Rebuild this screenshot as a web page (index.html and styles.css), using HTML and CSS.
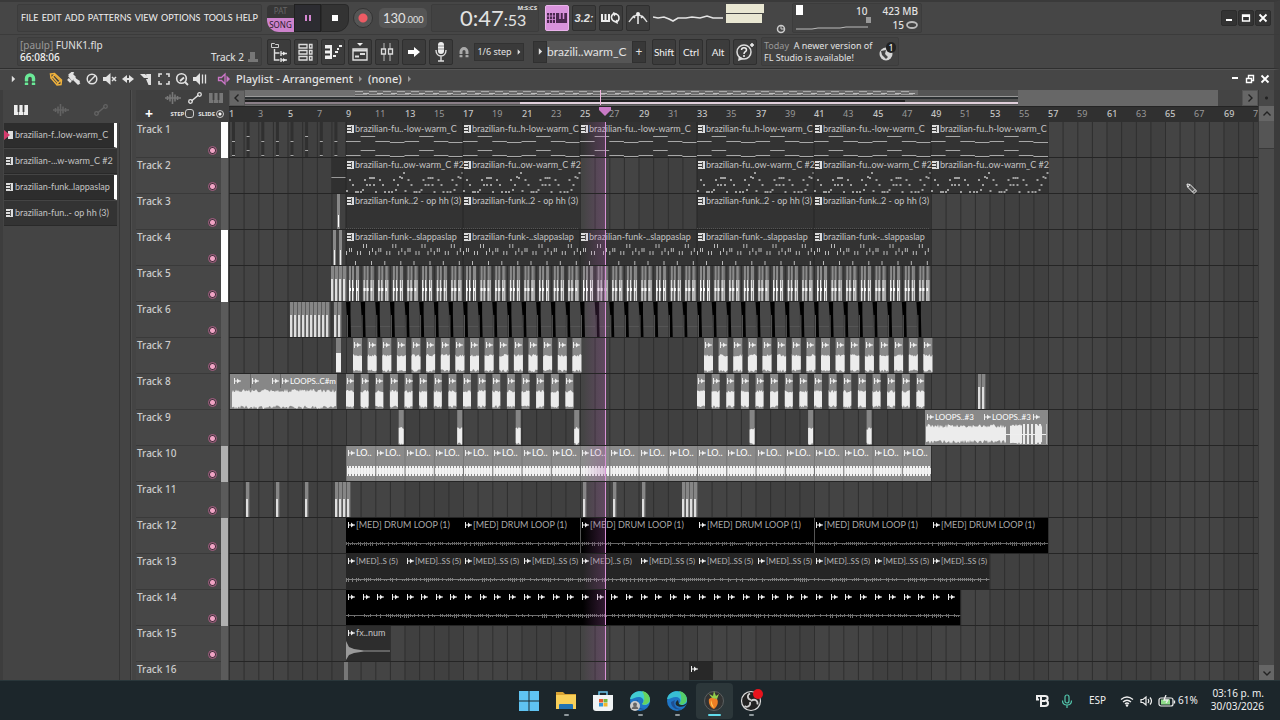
FILE: index.html
```html
<!DOCTYPE html>
<html lang="en">
<head>
<meta charset="utf-8">
<title>FUNK1.flp - FL Studio</title>
<link rel="stylesheet" href="styles.css">
</head>
<body>
<svg class="sprite" aria-hidden="true">
  <symbol id="i-tri" viewBox="0 0 6 8"><path d="M1 0l4 4-4 4z" fill="currentColor"/></symbol>
  <symbol id="i-magnet" viewBox="0 0 14 14"><path d="M3.500 13V6.500a3.500 3.500 0 0 1 7 0V13" fill="none" stroke="currentColor" stroke-width="3.400"/><path d="M1 10h5M8 10h5" stroke="#333" stroke-width="1"/></symbol>
  <symbol id="i-pencil" viewBox="0 0 14 14"><path d="M1.500 2l4-.5 7 6.500-.5 4.500-4 .5-6-7z" fill="none" stroke="currentColor" stroke-width="1.500"/><path d="M3.500 4.500l6 7M5.500 3l6.500 6.500M2 6.500l4-4.500M8 12l4-4" stroke="currentColor" stroke-width="1.200"/></symbol>
  <symbol id="i-brush" viewBox="0 0 14 14"><path d="M1 4l4-3 4 4-4 4z" fill="currentColor"/><path d="M2 3.500L6.500 0M1 7l3 3M7 6l5.500 6" stroke="currentColor" stroke-width="2.500"/><path d="M8 6l5 3-2 4-5-5z" fill="currentColor"/></symbol>
  <symbol id="i-no" viewBox="0 0 14 14"><circle cx="7" cy="7" r="4.800" fill="none" stroke="currentColor" stroke-width="1.500"/><path d="M3.600 10.400l6.800-6.800" stroke="currentColor" stroke-width="1.400"/></symbol>
  <symbol id="i-mute" viewBox="0 0 14 14"><path d="M0 5h3l4.500-4v12L3 9H0z" fill="currentColor"/><path d="M9 5l4 4M13 5L9 9" stroke="currentColor" stroke-width="1.500"/></symbol>
  <symbol id="i-slip" viewBox="0 0 14 14"><path d="M1 7l5-4v3h2V3l5 4-5 4V8H6v3z" fill="currentColor"/></symbol>
  <symbol id="i-slice" viewBox="0 0 14 14"><path d="M1 2h5l4 4H5zM7 2h5v11h-2.500L7 7h2z" fill="currentColor"/></symbol>
  <symbol id="i-select" viewBox="0 0 14 14"><path d="M2 5V2h3M9 2h3v3M12 9v3H9M5 12H2V9" fill="none" stroke="currentColor" stroke-width="1.600"/></symbol>
  <symbol id="i-zoom" viewBox="0 0 14 14"><circle cx="6.500" cy="6.500" r="4.800" fill="none" stroke="currentColor" stroke-width="1.600"/><path d="M10 10l3 3M5 9L9 5.500" stroke="currentColor" stroke-width="1.800"/></symbol>
  <symbol id="i-play" viewBox="0 0 14 14"><path d="M0 5h3l4-4v12L3 9H0z" fill="currentColor"/><path d="M9.500 2.500v9M12.500 2.500v9" stroke="currentColor" stroke-width="1.300"/></symbol>
  <symbol id="i-speaker" viewBox="0 0 14 14"><path d="M1.500 5.500h3L8 2v10L4.500 8.500h-3z" fill="none" stroke="currentColor" stroke-width="1.300"/><path d="M9.500 3.500L13 7l-3.500 3.500z" fill="currentColor"/></symbol>
  <symbol id="i-piano" viewBox="0 0 14 12"><path d="M0 1h14v10H0z" fill="currentColor"/><path d="M4.500 1v7M9.500 1v7" stroke="#3f3f3f" stroke-width="1.800"/><path d="M4.500 8v3M9.500 8v3" stroke="#3f3f3f" stroke-width=".6"/></symbol>
  <symbol id="i-wave" viewBox="0 0 16 12"><path d="M0 6h16M2.500 4v4M5 2.500v7M7.500 0v12M10 2.500v7M12.500 4v4" stroke="currentColor" stroke-width="1.600"/></symbol>
  <symbol id="i-auto" viewBox="0 0 14 12"><path d="M3.500 9l7-6" stroke="currentColor" stroke-width="1.500"/><circle cx="2.500" cy="9.500" r="1.800" fill="none" stroke="currentColor" stroke-width="1.300"/><circle cx="11.500" cy="2.500" r="1.800" fill="none" stroke="currentColor" stroke-width="1.300"/></symbol>
  <symbol id="i-min" viewBox="0 0 10 10"><path d="M2 6h6v2H2z" fill="currentColor"/></symbol>
  <symbol id="i-max" viewBox="0 0 10 10"><path d="M1.500 2h7v6h-7z" fill="none" stroke="currentColor" stroke-width="1.300"/><path d="M1 2h8v2H1z" fill="currentColor"/></symbol>
  <symbol id="i-restore" viewBox="0 0 10 10"><path d="M1.500 4.500h5v4h-5zM3.500 4V1.500h5v5H7" fill="none" stroke="currentColor" stroke-width="1.400"/></symbol>
  <symbol id="i-close" viewBox="0 0 10 10"><path d="M1.500 1.500l7 7M8.500 1.500l-7 7" stroke="currentColor" stroke-width="1.800"/></symbol>
  <symbol id="i-left" viewBox="0 0 10 10"><path d="M6.500 1.500L3 5l3.500 3.500" fill="none" stroke="currentColor" stroke-width="1.400"/></symbol>
  <symbol id="i-right" viewBox="0 0 10 10"><path d="M3.500 1.500L7 5 3.500 8.500" fill="none" stroke="currentColor" stroke-width="1.400"/></symbol>
  <symbol id="i-up" viewBox="0 0 10 10"><path d="M1.500 6.500L5 3l3.500 3.500" fill="none" stroke="currentColor" stroke-width="1.400"/></symbol>
  <symbol id="i-down" viewBox="0 0 10 10"><path d="M1.500 3.500L5 7l3.500-3.500" fill="none" stroke="currentColor" stroke-width="1.400"/></symbol>
  <symbol id="i-pattern" viewBox="0 0 7 8"><path d="M0 0h7v8H0z" fill="#ddd"/><path d="M0 2.500h4M0 5.500h4" stroke="#333" stroke-width="1"/><path d="M4.500 1v6" stroke="#555" stroke-width="1"/></symbol>
  <symbol id="i-arrow" viewBox="0 0 7 6"><path d="M.5 0v6M1 3h6" stroke="currentColor" stroke-width="1"/><path d="M3 .5L6 3 3 5.500z" fill="currentColor"/></symbol>
</svg>

<div class="app">
  <header class="bar bar-top">
    <nav class="menu panel">
      <button>FILE</button><button>EDIT</button><button>ADD</button><button>PATTERNS</button><button>VIEW</button><button>OPTIONS</button><button>TOOLS</button><button>HELP</button>
    </nav>
    <div class="transport">
      <button class="mode"><span class="mode-pat">PAT</span><span class="mode-song">SONG</span></button>
      <button class="pause" aria-label="Pause"><svg width="8" height="8" viewBox="0 0 8 8"><path d="M1 1h2v6H1zM5 1h2v6H5z" fill="#d587d3"/></svg></button>
      <button class="stop" aria-label="Stop"><svg width="6" height="6"><path d="M0 0h6v6H0z" fill="#fff"/></svg></button>
      <button class="record" aria-label="Record"></button>
      <div class="tempo">130<small>.000</small></div>
    </div>
    <div class="clock panel"><span class="clock-main">0:47</span><span class="clock-sub">:53</span><span class="clock-unit">M:S:CS</span></div>
    <div class="tools">
      <button class="tool on" aria-label="Typing keyboard"><svg width="20" height="12" viewBox="0 0 20 12"><path d="M0 1h8v10H0zM9 1h11v10H9z" fill="#4c2850"/><path d="M2.500 1v10M5.500 1v10M0 4h8M0 7.500h8" stroke="#d98fdc" stroke-width=".8"/><path d="M13 1v6M16.500 1v6" stroke="#d98fdc" stroke-width="1.500"/></svg></button>
      <button class="tool count">3.2ː</button>
      <button class="tool" aria-label="Loop record"><svg width="20" height="12" viewBox="0 0 20 12"><path d="M1 2v7h7V2M4.500 2v7" fill="none" stroke="#eee" stroke-width="2"/><path d="M13 1.500c-4 2-3 7 1 8M15 2c4 1 4 7 0 8" fill="none" stroke="#eee" stroke-width="1.500"/><path d="M12 0l4 1.500-3 3zM17 12l-4-2 3-2.500z" fill="#eee"/></svg></button>
      <button class="tool" aria-label="Metronome"><svg width="20" height="14" viewBox="0 0 20 14"><path d="M1 11C4 6 7 4 10 4s6 2 9 7" fill="none" stroke="#ddd" stroke-width="1.400"/><path d="M10 13V3M5 5l2 2M15 5l-2 2" stroke="#eee" stroke-width="1.500"/><circle cx="10" cy="3" r="2" fill="#eee"/></svg></button>
    </div>
    <svg class="scope" width="70" height="16" viewBox="0 0 70 16"><path d="M0 7l5 1 6-1 5 2 4 2 5-3 8 0 6-1 8 1 7-2 6 2h10" fill="none" stroke="#e4e4e4" stroke-width="1.600"/></svg>
    <div class="meters"><span class="meter"></span><span class="meter short"></span>
      <svg class="peak" width="10" height="10" viewBox="0 0 10 10"><circle cx="5" cy="5" r="3.500" fill="none" stroke="#ccc" stroke-width="1.500"/><path d="M5 2v3h3" fill="none" stroke="#ccc"/></svg></div>
    <div class="stats panel">
      <svg class="cpu" width="76" height="26" viewBox="0 0 76 26"><path d="M0 1h7v10H0z" fill="#fff"/><path d="M0 25h16l6-1h22l6-1h22" fill="none" stroke="#bbb" stroke-width="1"/><path d="M70 13h5v6h-5z" fill="#999"/></svg>
      <div class="stat-cpu">10</div>
      <div class="stat-mem"><span>423 MB</span><span>15 <svg width="12" height="8" viewBox="0 0 12 8"><ellipse cx="6" cy="4" rx="5" ry="3" fill="none" stroke="#bbb" stroke-width="1.800"/></svg></span></div>
    </div>
    <div class="window-buttons">
      <button aria-label="Minimize"><svg width="10" height="10"><use href="#i-min"/></svg></button><button aria-label="Maximize"><svg width="10" height="10"><use href="#i-max"/></svg></button><button aria-label="Close"><svg width="10" height="10"><use href="#i-close"/></svg></button>
    </div>
  </header>

  <div class="bar bar-second">
    <div class="hint panel">
      <div><span class="dim">[paulp]</span> FUNK1.flp</div>
      <div class="hint-line"><span class="bright">66:08:06</span><span>Track 2 <svg width="12" height="12" viewBox="0 0 12 12"><path d="M3 1h5v9H3zM1 8h10v3H1z" fill="#777"/></svg></span></div>
    </div>
    <div class="views">
      <button class="tool" aria-label="Browser"><svg width="18" height="20" viewBox="0 0 18 20"><path d="M1.500 1.500h3l1 1h3v3h-7z" fill="none" stroke="#ccc"/><path d="M4.500 7v11h5M4.500 11h5M11 9v5M11 16v4M11 11.500h6M11 18h6" fill="none" stroke="#ddd" stroke-width="1.400"/><path d="M13 9.500l3 2-3 2zM13 16l3 2-3 2z" fill="#eee"/></svg></button>
      <button class="tool" aria-label="Channel rack"><svg width="16" height="18" viewBox="0 0 16 18"><path d="M1 1.500h8v3.500H1zM1 7.500h8V11H1zM1 13.500h8V17H1zM11.500 1.500H14v3.500h-2.500zM11.500 7.500H14V11h-2.500zM11.500 13.500H14V17h-2.500z" fill="none" stroke="#ddd" stroke-width="1.300"/></svg></button>
      <button class="tool" aria-label="Piano roll"><svg width="18" height="16" viewBox="0 0 18 16"><path d="M1 1h7v14H1z" fill="#eee"/><path d="M1 5.500h5M1 10.500h5" stroke="#333" stroke-width="2"/><path d="M9 12h3M11 8h3M13 5h2M15 2h3" stroke="#eee" stroke-width="2.200"/></svg></button>
      <button class="tool" aria-label="Playlist"><svg width="18" height="20" viewBox="0 0 18 20"><path d="M6 1h6l-3 3z" fill="#eee"/><path d="M2 7h14v11H2z" fill="none" stroke="#ddd" stroke-width="1.400"/><path d="M2 8.500h14M4 14.500h4M9 12h5" stroke="#ddd" stroke-width="2"/></svg></button>
      <button class="tool" aria-label="Mixer"><svg width="14" height="20" viewBox="0 0 14 20"><path d="M4 1v18M10 1v18" stroke="#bbb"/><path d="M1.500 7h4v5h-4zM8.500 7h4v5h-4z" fill="#444" stroke="#ddd" stroke-width="1.300"/></svg></button>
      <button class="tool" aria-label="Jump"><svg width="14" height="12" viewBox="0 0 14 12"><path d="M1 4h6V1l6 5-6 5V8H1z" fill="#fff"/></svg></button>
      <button class="tool" aria-label="Record audio"><svg width="12" height="20" viewBox="0 0 12 20"><rect x="3" y="0" width="6" height="12" rx="3" fill="#eee"/><path d="M1 8c0 8 10 8 10 0M6 14v5M3 19h6" fill="none" stroke="#ddd" stroke-width="1.400"/><path d="M3 4h6M3 7h6" stroke="#777" stroke-width=".8"/></svg></button>
    </div>
    <div class="snap"><svg width="12" height="14"><use href="#i-magnet"/></svg><button class="snap-value">1/6 step <svg width="4" height="6"><use href="#i-tri"/></svg></button></div>
    <div class="pattern">
      <button class="pattern-side" aria-label="Pattern menu"><svg width="5" height="7"><use href="#i-tri"/></svg></button><button class="pattern-name">brazili..warm_C</button><button class="pattern-side">+</button>
    </div>
    <div class="views keys">
      <button class="tool">Shift</button><button class="tool">Ctrl</button><button class="tool">Alt</button>
      <button class="tool" aria-label="Help"><svg width="20" height="20" viewBox="0 0 20 20"><circle cx="9" cy="10" r="7" fill="none" stroke="#ddd" stroke-width="1.500"/><path d="M4 14l-1 5 6-2" fill="#ddd"/><path d="M6.500 8c0-3 5-3 5 0 0 2-2.500 1.500-2.500 4M9 13v2M17 1v4M15 3h4" fill="none" stroke="#eee" stroke-width="1.500"/></svg></button>
    </div>
    <div class="news panel"><p><span class="dim">Today</span>&nbsp; A newer version of<br>FL Studio is available!</p>
      <div class="globe"><svg width="18" height="20" viewBox="0 0 18 20"><circle cx="8" cy="12" r="6.500" fill="#d6d6d6"/><path d="M3 9l5-1-1 4 3 3-2 2-4-4z" fill="#444"/></svg><span class="badge">1</span></div></div>
  </div>

  <section class="bar bar-title">
    <div class="edit-tools">
      <button aria-label="Menu"><svg width="5" height="8"><use href="#i-tri"/></svg></button>
      <button class="green" aria-label="Snap"><svg width="14" height="14"><use href="#i-magnet"/></svg></button>
      <button class="amber" aria-label="Draw"><svg width="14" height="14"><use href="#i-pencil"/></svg></button>
      <button aria-label="Paint"><svg width="14" height="14"><use href="#i-brush"/></svg></button>
      <button aria-label="Delete"><svg width="14" height="14"><use href="#i-no"/></svg></button>
      <button aria-label="Mute"><svg width="14" height="14"><use href="#i-mute"/></svg></button>
      <button aria-label="Slip"><svg width="14" height="14"><use href="#i-slip"/></svg></button>
      <button aria-label="Slice"><svg width="14" height="14"><use href="#i-slice"/></svg></button>
      <button aria-label="Select"><svg width="14" height="14"><use href="#i-select"/></svg></button>
      <button aria-label="Zoom"><svg width="14" height="14"><use href="#i-zoom"/></svg></button>
      <button aria-label="Playback"><svg width="14" height="14"><use href="#i-play"/></svg></button>
    </div>
    <h1 class="title"><svg class="pink" width="14" height="14"><use href="#i-speaker"/></svg><span>Playlist - Arrangement</span><svg class="dim" width="5" height="6"><use href="#i-tri"/></svg><span>(none)</span><svg class="dim" width="5" height="6"><use href="#i-tri"/></svg></h1>
    <div class="pane-buttons">
      <button aria-label="Minimize pane"><svg width="10" height="10" viewBox="0 0 10 10"><path d="M2 3h6v2H2z" fill="#fff"/></svg></button><button aria-label="Restore pane"><svg width="10" height="10"><use href="#i-restore"/></svg></button><button aria-label="Close pane"><svg width="10" height="10"><use href="#i-close"/></svg></button>
    </div>
  </section>

  <main class="playlist">
    <aside class="picker">
      <div class="picker-tabs">
        <button class="active" aria-label="Patterns"><svg width="14" height="12"><use href="#i-piano"/></svg></button>
        <button aria-label="Audio"><svg width="16" height="12"><use href="#i-wave"/></svg></button>
        <button aria-label="Automation"><svg width="14" height="12"><use href="#i-auto"/></svg></button>
      </div>
      <div class="picker-body">
        <ul class="picker-list">
          <li class="current marked"><svg width="9" height="10" viewBox="0 0 9 10"><path d="M4 1h5v8H4z" fill="#ddd"/><path d="M0 0l6 5-6 5z" fill="#d63a6c"/></svg><span>brazilian-f..low-warm_C</span></li>
          <li><svg width="7" height="8"><use href="#i-pattern"/></svg><span>brazilian-...w-warm_C #2</span></li>
          <li class="marked"><svg width="7" height="8"><use href="#i-pattern"/></svg><span>brazilian-funk..lappaslap</span></li>
          <li><svg width="7" height="8"><use href="#i-pattern"/></svg><span>brazilian-fun..- op hh (3)</span></li>
        </ul>
        <div class="picker-scroll"></div>
      </div>
    </aside>

    <div class="arrangement">
      <div class="arr-head">
        <div class="track-tools">
          <div class="tt-row"><svg class="off" width="16" height="12"><use href="#i-wave"/></svg><svg width="14" height="12"><use href="#i-auto"/></svg><svg class="off" width="14" height="12"><use href="#i-piano"/></svg></div>
          <div class="tt-row small"><button class="add">+</button><label>STEP<input type="checkbox"></label><label>SLIDE<input type="radio" checked></label></div>
        </div>
        <div class="time-head">
          <div class="overview">
            <button aria-label="Scroll left"><svg width="10" height="10"><use href="#i-left"/></svg></button>
            <div class="overview-map" id="overview"></div>
            <button class="push" aria-label="Scroll right"><svg width="10" height="10"><use href="#i-right"/></svg></button>
          </div>
          <div class="ruler" id="ruler"></div>
        </div>
      </div>
      <div class="tracks" id="tracks"></div>
    </div>
    <div class="vscroll">
      <span class="vdot"></span>
      <button aria-label="Scroll up"><svg width="10" height="10"><use href="#i-up"/></svg></button>
      <div class="vthumb"></div>
      <button class="end" aria-label="Scroll down"><svg width="10" height="10"><use href="#i-down"/></svg></button>
    </div>
    <svg class="cursor" width="12" height="12" viewBox="0 0 12 12"><path d="M1 1l3 .5 6.500 6.500-2.500 2.500L1.500 4z" fill="#555" stroke="#eee"/><path d="M4 1.500L2 4M9 6.500L6.500 9" stroke="#eee"/></svg>
  </main>

  <footer class="taskbar">
    <div class="apps">
      <button aria-label="Start"><svg width="22" height="22" viewBox="0 0 22 22"><path d="M1 1h9.500v9.500H1zM11.500 1H21v9.500h-9.500zM1 11.500h9.500V21H1zM11.500 11.500H21V21h-9.500z" fill="#5fc3f2"/></svg></button>
      <button class="open" aria-label="Files"><svg width="22" height="22" viewBox="0 0 22 22"><path d="M1 2h7l2 2h11v15H1z" fill="#d9a334"/><path d="M1 5h20v14H1z" fill="#f8cf59"/><path d="M4 19v-4q0-1 1-1h12q1 0 1 1v4z" fill="#2272b4"/></svg></button>
      <button aria-label="Store"><svg width="22" height="22" viewBox="0 0 22 22"><path d="M7 6V2h8v4" fill="none" stroke="#69c4ea" stroke-width="1.500"/><path d="M1 5h20v13q0 3-3 3H4q-3 0-3-3z" fill="#f0f3f4"/><path d="M7 9h4v3.500H7z" fill="#e55730"/><path d="M11.500 9h4v3.500h-4z" fill="#79b53a"/><path d="M7 13h4v3.500H7z" fill="#3196d9"/><path d="M11.500 13h4v3.500h-4z" fill="#f0b72b"/></svg></button>
      <button class="open" aria-label="Edge profile"><svg width="22" height="22" viewBox="0 0 22 22"><circle cx="11" cy="11" r="10" fill="#1f75c5"/><path d="M1 9C3-2 21-1 21 10c0 5-6 6-8 4 3-3 1-7-3-7-4 0-7 3-9 2z" fill="#42cdd2"/><path d="M13 1c7 1 10 9 6 12-2 2-5 2-6 1 3-2 3-9 0-13z" fill="#67d35e"/><path d="M5 12c0 5 5 9 11 7-7 0-9-5-7-9z" fill="#1f4f92"/><circle cx="6" cy="16" r="5" fill="#ccc"/><circle cx="6" cy="14.500" r="2" fill="#666"/><path d="M2.500 19c1-4 6-4 7 0z" fill="#666"/></svg></button>
      <button class="open" aria-label="Edge"><svg width="22" height="22" viewBox="0 0 22 22"><circle cx="11" cy="11" r="10" fill="#1f75c5"/><path d="M1 9C3-2 21-1 21 10c0 5-6 6-8 4 3-3 1-7-3-7-4 0-7 3-9 2z" fill="#38bfd4"/><path d="M13 1c7 1 10 9 6 12-2 2-5 2-6 1 3-2 3-9 0-13z" fill="#55ce68"/><path d="M5 12c0 5 5 9 11 7-7 0-9-5-7-9z" fill="#1f4f92"/><path d="M13 14c2 2 6 1 8-1-1 4-8 5-11 2-1-2 0-4 2-5z" fill="#1d2a30"/></svg></button>
      <button class="open focused" aria-label="FL Studio"><svg width="22" height="22" viewBox="0 0 22 22"><circle cx="11" cy="11" r="9.500" fill="#333" stroke="#5c6060"/><path d="M6 9q3-3 8 0c2 3 0 8-3 10-3-1-6-5-5-10z" fill="#ef7f25"/><path d="M8 10q1 4 3 8-4-3-3-8z" fill="#ffd05c"/><path d="M9 8L6 4l4 2 1-5 2 5 3-2-2 5z" fill="#94cf4c"/></svg></button>
      <button class="open" aria-label="OBS"><svg width="24" height="24" viewBox="0 0 24 24"><circle cx="12" cy="12" r="9.500" fill="#222" stroke="#ddd" stroke-width="1.200"/><path d="M12 11C8 10 8 6 11 4.500M12 12c4-3 7 0 6.500 3.500M11 13c1 4-3 6-5.500 4" fill="none" stroke="#ccc" stroke-width="1.800"/><circle cx="19" cy="5" r="5" fill="#e8131c"/></svg></button>
    </div>
    <div class="tray">
      <svg width="14" height="14" viewBox="0 0 14 14"><path d="M1 2h9c3.500 0 3.500 4.500 0 4.500 4 0 4 5.500 0 5.500H6V3M1 5.500h3M2 2v3" fill="none" stroke="#eee" stroke-width="2"/><path d="M6 7h4" stroke="#eee" stroke-width="2"/></svg>
      <svg class="mic" width="12" height="14" viewBox="0 0 12 14"><rect x="4" y="1" width="4" height="8" rx="2" fill="none" stroke="#53c7ad" stroke-width="1.200"/><path d="M1.500 6.500c0 6 9 6 9 0M6 11v3" fill="none" stroke="#53c7ad" stroke-width="1.200"/></svg>
      <span class="lang">ESP</span>
      <svg width="14" height="12" viewBox="0 0 14 12"><path d="M1 4.500q6-5 12 0M3 7q4-3.500 8 0M5 9q2-2 4 0" fill="none" stroke="#eee" stroke-width="1.300"/><circle cx="7" cy="10.500" r="1.200" fill="#eee"/></svg>
      <svg width="12" height="12" viewBox="0 0 12 12"><path d="M1 4.500h2L6 2v8L3 7.500H1zM8 4q1.500 2 0 4M10 2.500q3 3.500 0 7" fill="none" stroke="#eee" stroke-width="1.200"/></svg>
      <span class="battery"><svg width="18" height="12" viewBox="0 0 18 12"><rect x="1" y="3" width="14" height="8" rx="2" fill="none" stroke="#eee" stroke-width="1.200"/><path d="M3 4.500h9v5H3z" fill="#8fdc8a"/><path d="M16.500 5.500v3M8 0L6 5h4L8 8" fill="none" stroke="#eee" stroke-width="1.300"/></svg>61%</span>
      <time class="now"><span>03:16 p. m.</span><span>30/03/2026</span></time>
    </div>
  </footer>
</div>
<script src="playlist.js"></script>
</body>
</html>
```
FILE: styles.css
```css
* { box-sizing: border-box; }
body { margin: 0; background: #444; color: #e2e2e2; font: 10px/12px "Noto Sans", "Liberation Sans", sans-serif; }
button { margin: 0; padding: 0; border: 0; background: none; color: inherit; font: inherit; display: inline-flex; align-items: center; justify-content: center; }
svg { flex: none; display: block; }
.sprite { position: absolute; width: 0; height: 0; }
.dim { color: #999; }
.bright { color: #f2f2f2; font-weight: 500; }
.app { height: 100vh; min-height: 480px; display: flex; flex-direction: column; overflow: hidden; }
.bar { display: flex; flex: none; align-items: center; background: #464646; border-right: 6px solid #3d3d3d; padding-left: 17px; }
.panel { border: 1px solid #3c3c3c; border-radius: 2px; background: #424242; }

/* top row */
.bar-top { height: 35px; border-top: 2px solid #3a3a3a; border-bottom: 1px solid #3b3b3b; }
.menu { width: 245px; height: 28px; display: flex; align-items: center; justify-content: space-between; padding: 0 3px; font: 9px/16px Lato, "Liberation Sans", sans-serif; color: #f0f0f0; margin-right: 5px; }
.transport { display: flex; align-items: center; width: 160px; }
.mode { width: 27px; height: 27px; flex-direction: column; border-radius: 4px 0 0 12px; overflow: hidden; font-size: 8px; line-height: 12px; background: #363636; }
.mode-pat { color: #666; height: 13px; }
.mode-song { background: #cd83cc; color: #2b1a2c; height: 14px; width: 100%; line-height: 13px; }
.pause { width: 27px; height: 28px; background: #2c2c31; border: 1px solid #202020; }
.stop { width: 28px; height: 28px; background: #333; border-radius: 0 4px 12px 0; border: 1px solid #292929; }
.record { width: 20px; height: 20px; margin: 0 6px 0 4px; border-radius: 50%; background: radial-gradient(circle, #ed5b64 0 4px, #555 5px); border: 1px solid #333; }
.tempo { flex: 1; height: 20px; border-radius: 5px; background: #555; padding-left: 4px; font: 13px/20px Lato, "Liberation Sans", sans-serif; }
.tempo small { font-size: 9px; }
.clock { width: 108px; height: 28px; margin: 0 6px 0 4px; position: relative; display: flex; align-items: baseline; padding-left: 28px; font-family: Lato, "Liberation Sans", sans-serif; }
.clock-main { font-size: 22px; line-height: 26px; }
.clock-sub { font-size: 16px; line-height: 14px; }
.clock-unit { position: absolute; right: 1px; top: 0; font: bold 6px/6px "Noto Sans", sans-serif; }
.tools, .views { display: flex; gap: 3px; }
.tool { width: 24px; height: 26px; background: #3c3c3c; border: 1px solid #2f2f2f; border-radius: 2px; }
.tool.on { background: #d993dc; border-color: #e9b2ea; }
.count { font: italic bold 11px/12px "Liberation Sans", sans-serif; }
.scope { margin: 0 3px; }
.meters { width: 57px; height: 28px; position: relative; }
.meter { display: block; width: 38px; height: 9px; margin-bottom: 1px; background: #e9e7d2; }
.meter.short { width: 36px; }
.peak { position: absolute; right: -3px; bottom: -2px; }
.stats { height: 30px; margin-left: 9px; padding: 0 3px; display: flex; font: 500 10px/14px "Noto Sans", sans-serif; }
.stat-cpu { margin-left: -16px; width: 16px; }
.stat-mem { width: 46px; display: flex; flex-direction: column; align-items: flex-end; }
.stat-mem span { display: flex; align-items: center; gap: 2px; }
.window-buttons { margin-left: auto; display: flex; padding-right: 3px; gap: 1px; }
.window-buttons button { width: 16px; height: 16px; background: #333; border: 1px solid #2c2c2c; border-radius: 2px; color: #fff; }

/* second row */
.bar-second { height: 34px; border-bottom: 1px solid #2f2f2f; }
.hint { width: 245px; height: 29px; padding: 1px 2px; margin-right: 5px; line-height: 12px; }
.hint-line { display: flex; justify-content: space-between; }
.hint-line span { display: flex; gap: 3px; }
.snap { display: flex; align-items: center; gap: 4px; margin-left: 5px; color: #aaa; }
.snap-value { width: 50px; height: 18px; background: #3a3a3a; border: 1px solid #323232; gap: 5px; color: #e2e2e2; font: 9px/12px "Noto Sans", sans-serif; white-space: nowrap; }
.pattern { display: flex; margin: 0 6px 0 9px; height: 22px; }
.pattern-side { width: 14px; background: #383838; border: 1px solid #303030; font-size: 12px; }
.pattern-name { width: 85px; background: #555; justify-content: flex-start; font: 12px/18px Lato, "Liberation Sans", sans-serif; }
.keys .tool { font: 10px/14px Lato, "Liberation Sans", sans-serif; color: #f2f2f2; }
.news { margin-left: 4px; width: 138px; height: 29px; display: flex; align-items: center; justify-content: space-between; padding: 0 2px; white-space: nowrap; font-size: 9px; }
.news p { margin: 0; }
.globe { position: relative; }
.badge { position: absolute; top: 0; right: 0; width: 10px; height: 11px; border-radius: 5px; background: #222; color: #fff; font-size: 9px; line-height: 11px; text-align: center; }

/* playlist title row */
.bar-title { height: 21px; border-top: 1px solid #555; padding: 0 0 2px 6px; }
.edit-tools { display: flex; }
.edit-tools button { width: 18px; height: 18px; }
.edit-tools button:first-child { width: 14px; }
.edit-tools .green { color: #6bea98; margin: 0 8px 0 1px; }
.edit-tools .amber { color: #f0b23c; }
.title { margin: 0 0 0 8px; display: flex; align-items: center; gap: 5px; font: 500 11px/14px "Noto Sans", sans-serif; }
.pink { color: #cc76c8; }
.pane-buttons { margin-left: auto; display: flex; padding-right: 2px; color: #fff; }
.pane-buttons button { width: 15px; height: 15px; }

/* playlist */
.playlist { flex: 1; min-height: 0; display: flex; position: relative; border-right: 6px solid #3b3b3b; overflow: hidden; }
.picker { width: 131px; flex: none; display: flex; flex-direction: column; border-right: 1px solid #353535; border-left: 3px solid #3d3d3d; }
.picker-tabs { height: 33px; display: flex; align-items: flex-end; padding: 0 11px 7px 11px; justify-content: space-between; color: #636363; width: 116px; }
.picker-tabs .active { color: #eee; }
.picker-body { flex: 1; display: flex; gap: 2px; }
.picker-list { list-style: none; margin: 0; padding: 0 0 0 1px; width: 114px; display: flex; flex-direction: column; gap: 1px; }
.picker-list li { height: 25px; display: flex; align-items: center; gap: 2px; padding-left: 2px; background: #333; border-bottom: 1px solid #292929; color: #c4c4c4; font: 9px/12px Lato, "Liberation Sans", sans-serif; white-space: nowrap; }
.picker-list .marked { border-right: 3px solid #fff; background: #2d2d2d; }
.picker-list .current { padding-left: 0; }
.picker-scroll { width: 11px; border-left: 1px solid #353535; background: #444; }

.arrangement { flex: 1; min-width: 0; display: flex; flex-direction: column; padding-left: 4px; border-left: 1px solid #4e4e4e; }
.arr-head { display: flex; flex: none; height: 32px; }
.track-tools { width: 93px; flex: none; background: #404040; }
.tt-row { display: flex; height: 15px; align-items: center; justify-content: flex-end; gap: 7px; padding-right: 6px; }
.tt-row.small { height: 17px; font: bold 6px/8px "Noto Sans", sans-serif; gap: 4px; padding-right: 5px; }
.tt-row .off { color: #777; }
.add { font-size: 14px; margin-right: auto; margin-left: 9px; color: #fff; }
.tt-row label { display: flex; align-items: center; gap: 1px; }
.tt-row input { appearance: none; width: 9px; height: 9px; margin: 0; border: 1px solid #ccc; border-radius: 3px; }
.tt-row input[type="radio"] { width: 8px; height: 8px; border-radius: 50%; background: radial-gradient(circle, #fff 0 1px, transparent 2px); }
.time-head { flex: 1; min-width: 0; display: flex; flex-direction: column; }
.overview { display: flex; height: 16px; }
.overview button { width: 16px; background: #666; border: 1px solid #555; color: #222; }
.overview .push { margin-left: auto; }
.overview-map { flex: 1; margin-right: 24px; background: #676767; overflow: hidden; }
.ruler { position: relative; height: 16px; background: #303030; border-top: 1px solid #242424; overflow: hidden; }
.ruler span { position: absolute; top: 1px; font-size: 9px; line-height: 12px; color: #999; }
.ruler .beat { font-weight: 500; color: #c4c4c4; }
.marker { position: absolute; top: 0; }

.tracks { flex: 1; min-height: 0; overflow: hidden; }
.track { display: flex; height: 36px; }
.track-name { width: 85px; flex: none; display: flex; justify-content: space-between; border-bottom: 1px solid #3a3a3a; background: #474747; padding: 1px 4px 0 1px; font: 500 10px/13px "Noto Sans", sans-serif; color: #ccc; }
.led { width: 9px; height: 9px; border-radius: 50%; align-self: flex-end; margin-bottom: 2px; background: radial-gradient(circle, #f0a3c4 0 2px, #40303a 3px); border: 1px solid #a85f84; }
.strip { width: 7px; flex: none; background: #5b5b5b; margin-right: 1px; }
.strip.hi { background: #fff; }
.strip.mid { background: #b0b0b0; }
.lane { flex: 1; position: relative; overflow: hidden; background: #444; border-bottom: 1px solid #252525; }
.lane-art { position: absolute; left: 0; top: 0; }
.label { position: absolute; top: 1px; display: flex; align-items: center; gap: 1px; height: 12px; color: #c4c4c4; white-space: nowrap; font: 9px/12px Lato, "Liberation Sans", sans-serif; }
.label.light { color: #fff; }
.label.gray { color: #a8a8a8; }
.label.tight { color: #b4b4b4; font-size: 8px; }
.label.tight.light { color: #fff; }
.label svg { color: #eee; }

.vscroll { width: 16px; flex: none; display: flex; flex-direction: column; background: #4b4b4b; border-left: 1px solid #383838; }
.vscroll button { height: 15px; background: #666; color: #222; }
.vdot { height: 16px; display: flex; background: radial-gradient(circle, #222 0 1px, #484848 2px); }
.vthumb { height: 28px; background: #555; border-bottom: 1px solid #393939; }
.vscroll .end { margin-top: auto; }
.cursor { position: absolute; left: 1186px; top: 93px; }

/* taskbar */
.taskbar { flex: none; height: 40px; display: flex; align-items: center; background: #1c262b; border-top: 1px solid #29363a; position: relative; }
.apps { margin: 0 auto; display: flex; }
.apps button { width: 37px; height: 36px; position: relative; border-radius: 4px; }
.apps .open::after { content: ""; position: absolute; bottom: 3px; width: 5px; height: 2px; border-radius: 1px; background: #8f989c; }
.apps .focused { background: #2c373a; }
.apps .focused::after { width: 13px; background: #61dbea; }
.tray { position: absolute; right: 16px; top: 0; bottom: 0; display: flex; align-items: center; gap: 6px; font: 10px/13px "Noto Sans", sans-serif; color: #f0f0f0; }
.mic { margin-left: 6px; }
.lang { margin: 0 8px 0 10px; }
.battery { display: flex; align-items: center; gap: 2px; }
.now { display: flex; flex-direction: column; align-items: flex-end; margin: 0 0 2px 7px; }
```
FILE: playlist.js
```js
// Horizontal scale: eight bars take 117 pixels.
const BAR = 117 / 8;
const BARS = 71;
const H = 36;
const PLAYHEAD = 376;

let seed = 7;
const rnd = () => (seed = (seed * 16807) % 2147483647) / 2147483647;
const rect = (x, y, w, h, fill) => `<rect x="${x.toFixed(1)}" y="${y}" width="${w.toFixed(1)}" height="${h}" fill="${fill}"/>`;
const range = (a, b, step = 1) => { const r = []; for (let i = a; i < b; i += step) r.push(i); return r; };

function grid() {
  let s = '';
  for (let i = 0; i < BARS; i++) {
    if (Math.floor(i / 4) % 2) s += rect(i * BAR, 0, BAR, H, '#404040');
    s += rect(i * BAR, 0, 1, H, '#2f2f2f');
  }
  return s;
}

// Solid waveform with a ragged outline.
function wave(x, w, mid, amp, fill, jitter = 0.3, step = 1) {
  let up = '', down = '';
  for (let i = 0; i <= w; i += step) {
    const a = amp * (1 - rnd() * jitter);
    up += `L${(x + i).toFixed(1)} ${(mid - a).toFixed(1)}`;
    down = `L${(x + i).toFixed(1)} ${(mid + amp * (1 - rnd() * jitter)).toFixed(1)}` + down;
  }
  return `<path d="M${x.toFixed(1)} ${mid}${up}${down}Z" fill="${fill}"/>`;
}

// Row of very short clips, each with its own bright tail.
function sliver(x, w, split = 13) {
  let s = '';
  for (let i = 0; i < w - 1; i += 4) {
    s += rect(x + i, 0, 3, H - 1, '#868686') + rect(x + i + 3, 0, 1, H - 1, '#5c5c5c') + rect(x + i, split, 2, H - 1 - split, '#dedede');
  }
  return s;
}

const block = (x, w) => rect(x, 0, w, H - 1, '#898989') + wave(x, w, 25, 9, '#ececec', 0.3);
const clipBack = (from, to, fill) => rect(from * BAR, 0, (to - from) * BAR, H - 1, fill) + `<path d="M${from * BAR} 0v35" stroke="#262626"/>`;

const pat = (bar, text) => ({ x: bar * BAR + 1, text, icon: 'pattern' });
const aud = (bar, text, cls = '') => ({ x: bar * BAR + 2, text, icon: 'arrow', cls });

function melody() {
  let s = '';
  const ys = [19, 14, 19, 20, 19, 14, 19, 20];
  range(0, 8).forEach(i => {
    s += rect(i * BAR + 3, 0, 3, 35, '#303030');
    s += rect(i * BAR + 3, ys[i % 4 === 1 ? 1 : 0], 3, 1, '#aaa') + rect(i * BAR + 3, ys[i % 4 === 1 ? 1 : 0] + 14, 3, 1, '#aaa');
  });
  range(8, 56, 8).forEach(b => {
    s += clipBack(b, b + 8, '#333');
    ys.forEach((y, i) => { s += rect((b + i) * BAR, y, BAR, 1, '#a8a8a8') + rect((b + i) * BAR, y + 14, BAR, 1, '#a8a8a8'); });
  });
  return s;
}

const ARP = [[0,32],[3,21],[6,26],[9,34],[11,34],[14,34],[16,31],[18,21],[20,26],[23,19],[25,19],[23,26],[27,19],[27,26],[29,34],[33,21],[36,26],[38,34],[42,34],[45,34],[47,21],[49,31],[51,26],[53,18],[55,19],[57,14]];
function arp() {
  let s = rect(7 * BAR, 0, BAR, 35, '#303030') + rect(7 * BAR, 19, BAR, 1, '#999');
  [8, 16, 32, 40, 48].forEach(b => {
    s += clipBack(b, b + 8, '#333');
    [0, 4].forEach(o => ARP.forEach(([x, y]) => { s += rect((b + o) * BAR + x, Math.min(y, 33), 2, 2, '#a0a0a0'); }));
  });
  return s;
}

function hats() {
  let s = rect(108, 0, 3, 35, '#888') + rect(109, 21, 1, 12, '#fff');
  [8, 16, 32, 40].forEach(b => {
    s += clipBack(b, b + 8, '#333');
    range(0, 58).forEach(i => { s += rect(b * BAR + i * 2, 34, 1, 1, '#555'); });
  });
  return s;
}

function slaps() {
  let s = rect(104, 0, 3, 35, '#888') + rect(110, 0, 3, 35, '#888') + rect(105, 20, 1, 15, '#eee') + rect(111, 20, 1, 15, '#eee');
  range(8, 48, 8).forEach(b => {
    s += clipBack(b, b + 8, '#333');
    range(0, 4).forEach(k => {
      const x = (b + k * 2) * BAR;
      [[0, 21], [3, 18], [5, 18], [11, 21], [14, 21], [17, 14], [20, 14], [23, 21], [26, 18]].forEach(([dx, y]) => { s += rect(x + dx, y, 1, 4, '#bbb'); });
      s += rect(x + 9, 31, 1, 4, '#bbb') + rect(x + 25, 31, 1, 4, '#bbb');
    });
  });
  return s;
}

function claps() {
  let s = sliver(102, 14);
  range(8, 48).forEach(b => {
    [3, 6, 10].forEach(o => {
      s += rect(b * BAR + o, 0, 2, 35, '#8b8b8b') + rect(b * BAR + o, 14, 1, 21, '#eee') + rect(b * BAR + o, 22, 2, 3, '#fff');
    });
    s += rect(b * BAR + 12, 0, 1, 35, '#8b8b8b') + rect(b * BAR + 12, 14, 1, 21, '#ddd');
  });
  return s;
}

function kicks() {
  let s = sliver(61, 40) + sliver(105, 8);
  range(8, 48).forEach(b => {
    const x = b * BAR;
    if (b < 47) s += rect(x + 4, 0, 11, 35, '#484848') + rect(x + 4, 24, 11, 1, '#555');
    s += `<path d="M${x} 0h4.500v13l.5 22h-3l-1-22z" fill="#000"/>` + rect(x + 1, 13, 1, 22, '#555');
  });
  return s;
}

const run = (start, w, n = 16) => range(0, n).map(i => block((start + i) * BAR, w)).join('');
const arrows = (start, n = 16) => range(0, n).map(i => ({ x: (start + i) * BAR + 1, text: '', icon: 'arrow' }));

function loops8() {
  return rect(1, 0, 107, 35, '#878787') + wave(3, 104, 25, 10, '#e8e8e8', 0.35) + rect(21, 0, 1, 14, '#666') + rect(51, 0, 1, 14, '#666')
    + run(8, 8) + run(32, 8) + sliver(749, 6);
}

function loops9() {
  let s = [11.6, 15.6, 19.6, 23.6, 35.6, 39.6, 43.6].map(b => rect(b * BAR, 0, 5, 35, '#858585') + wave(b * BAR, 5, 26, 9, '#eee')).join('');
  s += rect(696, 0, 123, 35, '#898989') + wave(697, 80, 24, 10, '#ececec', 0.4) + wave(781, 12, 24, 10, '#ececec', 0.2);
  [794, 798, 802, 806, 810].forEach(x => { s += rect(x, 14, 2, 20, '#ececec'); });
  return s + rect(777, 24, 40, 1, '#eee') + wave(808, 5, 24, 10, '#ececec') + rect(817, 14, 1, 20, '#bbb');
}

function loops10() {
  let s = rect(8 * BAR, 0, 40 * BAR, 35, '#8a8a8a') + rect(8 * BAR, 22, 40 * BAR, 6, '#e8e8e8');
  for (let x = 117; x < 701; x += 3) s += rect(x, 20, 2, 10, '#f2f2f2');
  range(8, 48, 2).forEach(b => { s += rect(b * BAR, 0, 1, 35, '#777'); });
  return s;
}

function quiet(from, to, fill, ink) {
  let s = rect(from * BAR, 0, (to - from) * BAR, 36, fill) + rect(from * BAR, 25, (to - from) * BAR, 1, ink);
  for (let x = from * BAR; x < to * BAR - 2; x += 2) {
    const h = 1 + Math.round(rnd() * 2);
    if (rnd() > 0.25) s += rect(x, 25 - Math.floor(h / 2), 1, h + 1, ink);
  }
  return s;
}

const drop = rect(117, 0, 44, 36, '#2d2d2d') + '<path d="M117 15l3 6 5 2 10 1.500h26v1h-26l-10 1.500-5 2-3 5z" fill="#999"/>';
const names1 = ['-low', 'h-low', '-low', 'h-low', '-low', 'h-low'];
const mark = x => ({ x, text: '', icon: 'arrow' });

const TRACKS = [
  { strip: 'hi', art: melody(), labels: names1.map((n, i) => pat(8 + i * 8, `brazilian-fu..${n}-warm_C`)) },
  { art: arp(), labels: [8, 16, 32, 40, 48].map(b => pat(b, 'brazilian-fu..ow-warm_C #2')) },
  { art: hats(), labels: [8, 16, 32, 40].map(b => pat(b, 'brazilian-funk..2 - op hh (3)')) },
  { strip: 'hi', art: slaps(), labels: range(8, 48, 8).map(b => pat(b, 'brazilian-funk-..slappaslap')) },
  { strip: 'hi', art: claps() },
  { art: kicks() },
  { art: rect(107, 0, 5, 35, '#808080') + rect(107, 15, 5, 19, '#eee') + run(8.48, 9) + run(32.48, 9), labels: [...arrows(8.48), ...arrows(32.48)] },
  { art: loops8(), labels: [mark(5), mark(23), mark(43), { x: 53, text: 'LOOPS..C#m', icon: 'arrow', cls: 'light tight' }, ...arrows(8), ...arrows(32)] },
  { art: loops9(), labels: [{ x: 698, text: 'LOOPS..#3', icon: 'arrow', cls: 'light tight' }, { x: 755, text: 'LOOPS..#3', icon: 'arrow', cls: 'light tight' }, mark(804)] },
  { strip: 'mid', art: loops10(), labels: range(8, 48, 2).map(b => aud(b, 'LO..', 'light')) },
  { art: [17, 47, 76, 354, 384, 413].map(x => sliver(x, 4, 17)).join('') + sliver(106, 14, 17) + sliver(453, 15, 17) },
  { strip: 'mid', art: quiet(8, 56, '#000', '#666') + rect(24 * BAR, 0, 1, 36, '#555') + rect(40 * BAR, 0, 1, 36, '#555'), labels: range(8, 56, 8).map(b => aud(b, '[MED] DRUM LOOP (1)', 'gray')) },
  { strip: 'mid', art: quiet(8, 52, '#252525', '#808080'), labels: range(8, 52, 4).map(b => aud(b, b === 8 || b === 24 ? '[MED]..S (5)' : '[MED]..SS (5)', 'tight')) },
  { strip: 'mid', art: quiet(8, 50, '#000', '#707070'), labels: range(8, 50).map(b => aud(b, '')) },
  { art: drop, labels: [aud(8, 'fx..num')] },
  { art: rect(115, 0, 4, 36, '#777') + rect(460, 0, 24, 36, '#282828'), labels: [mark(462)] }
];

const glow = '<defs><linearGradient id="glow"><stop offset="0" stop-color="#b060b0" stop-opacity="0"/><stop offset="1" stop-color="#a050a0" stop-opacity=".3"/></linearGradient></defs>';
const head = glow + `<rect x="${PLAYHEAD - 22}" width="22" height="36" fill="url(#glow)"/>` + rect(PLAYHEAD, 0, 1, 36, '#d993d6');

document.getElementById('tracks').innerHTML = TRACKS.map((t, i) => {
  const labels = (t.labels || []).map(l => {
    const size = l.icon === 'pattern' ? 'width="7" height="8"' : 'width="7" height="6"';
    return `<span class="label ${l.cls || ''}" style="left:${Math.round(l.x)}px"><svg ${size}><use href="#i-${l.icon}"/></svg>${l.text}</span>`;
  }).join('');
  return `<div class="track"><div class="track-name"><span>Track ${i + 1}</span><i class="led"></i></div><i class="strip ${t.strip || ''}"></i>
    <div class="lane"><svg class="lane-art" width="1038" height="36">${grid()}${t.art}</svg>${labels}<svg class="lane-art" width="1038" height="36">${head}</svg></div></div>`;
}).join('');

document.getElementById('ruler').innerHTML = range(0, BARS, 2).map(b =>
  `<span class="${b % 4 ? '' : 'beat'}" style="left:${Math.round(b * BAR)}px">${b + 1}</span>`).join('')
  + `<svg class="marker" style="left:${PLAYHEAD - 6}px" width="12" height="9" viewBox="0 0 12 9"><path d="M0 0h12v3L6 9 0 3z" fill="#c97ac6"/></svg>`;

// Miniature of the whole song above the ruler.
let map = rect(0, 0, 773, 15, '#555') + rect(110, 0, 563, 5, '#6b6b6b');
for (let x = 110; x < 670; x += 14) map += rect(x, 1, 8, 1, '#aaa') + rect(x + 8, 3, 6, 1, '#bbb') + rect(x, 4, 12, 1, '#999');
map += rect(0, 0, 110, 6, '#707070') + rect(0, 7, 773, 2, '#2c3032') + rect(0, 10, 660, 2, '#202020') + rect(0, 6, 773, 1, '#999')
  + rect(0, 12, 275, 2, '#8b7f88') + rect(275, 12, 498, 2, '#e0cfdb') + rect(355, 0, 1, 15, '#f0b5df');
document.getElementById('overview').innerHTML = `<svg width="773" height="16">${map}</svg>`;
```
